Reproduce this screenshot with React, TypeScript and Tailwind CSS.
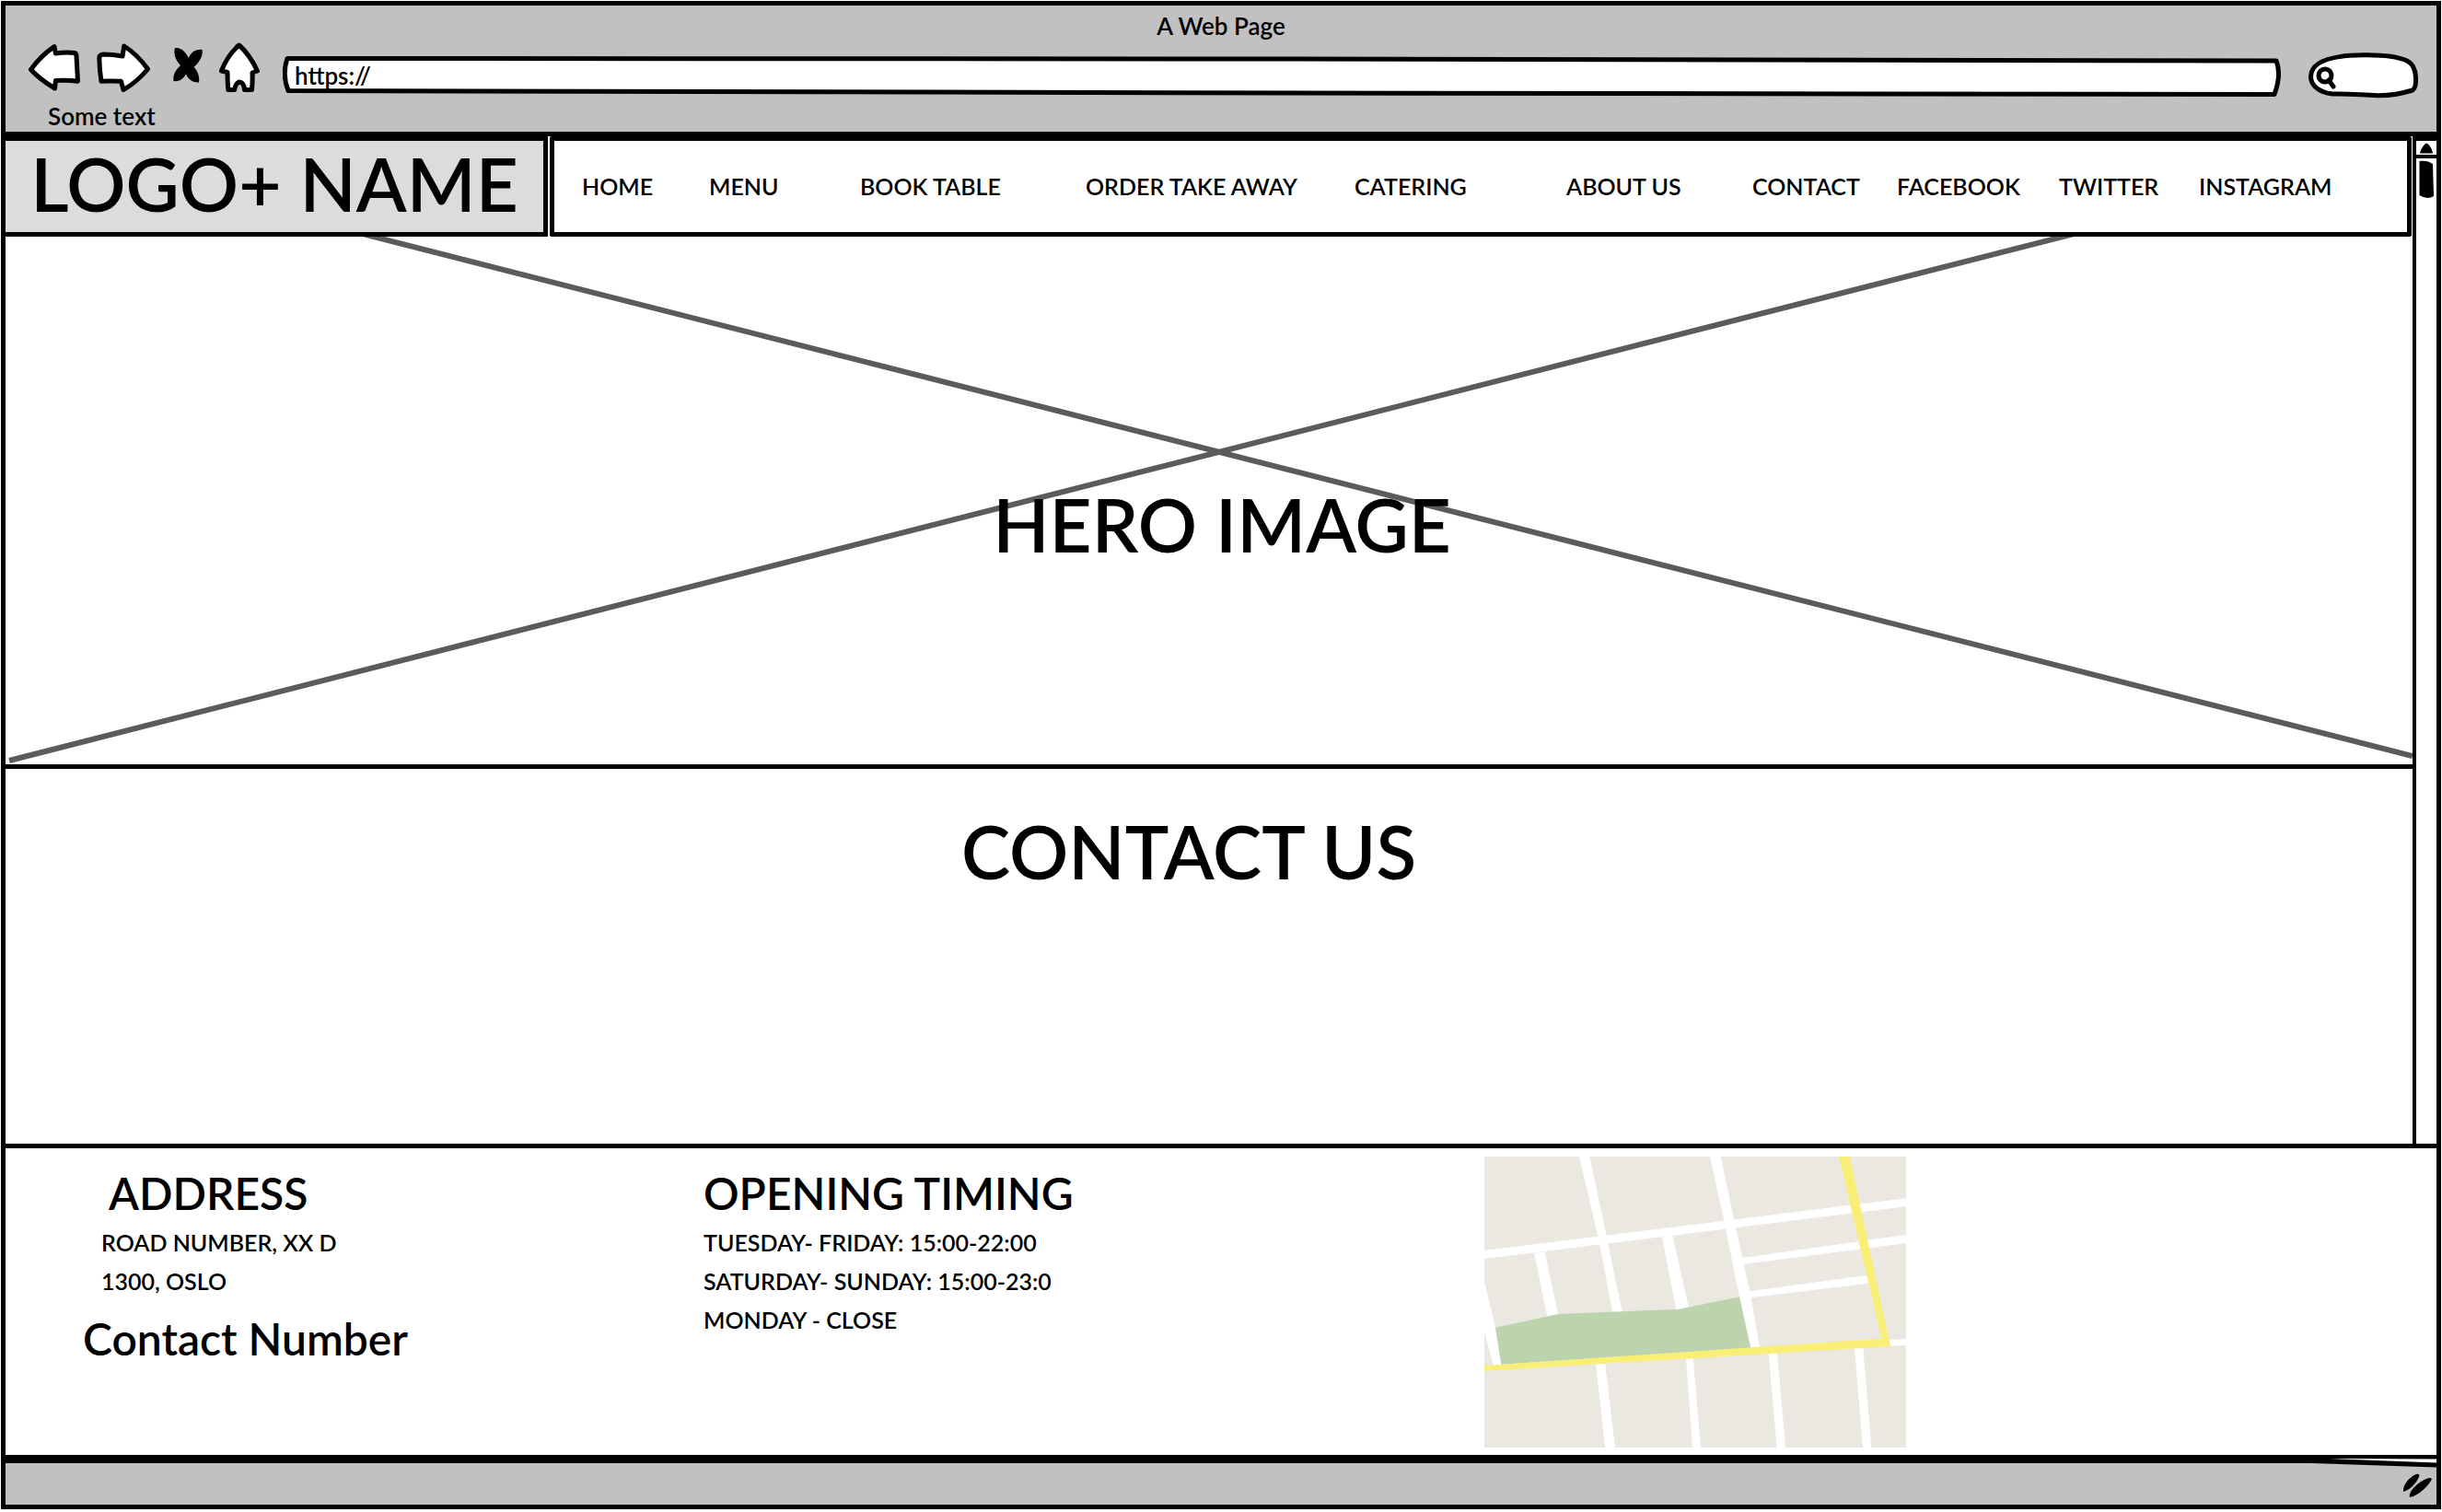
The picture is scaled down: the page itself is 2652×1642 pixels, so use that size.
const navLinks = [
  'HOME',
  'MENU',
  'BOOK TABLE',
  'ORDER TAKE AWAY',
  'CATERING',
  'ABOUT US',
  'CONTACT',
  'FACEBOOK',
  'TWITTER',
  'INSTAGRAM',
];

const openingTimes = [
  'TUESDAY- FRIDAY: 15:00-22:00',
  'SATURDAY- SUNDAY: 15:00-23:0',
  'MONDAY - CLOSE',
];

const sketch = {
  fill: 'white',
  stroke: 'black',
  strokeWidth: 5,
  strokeLinejoin: 'round' as const,
  strokeLinecap: 'round' as const,
};

function BrowserBar() {
  return (
    <header className="border-[5px] border-black bg-[#c1c1c1] pt-1 pb-px">
      <p className="text-center leading-9">A Web Page</p>
      <div className="flex h-16 items-start pr-5 pl-[25px]">
        <button type="button" aria-label="Back" className="mr-[18px] shrink-0">
          <svg width="56" height="54" viewBox="0 0 56 54" {...sketch}>
            <path d="M2.5 29.5 Q14 14 28 4.7 L29.4 12 Q40 10.5 50 11.5 Q52 12 52 15 L53.5 42.3 Q42 40.5 29.4 41.5 L28.6 50 Q12 40 2.5 29.5Z" />
          </svg>
        </button>
        <button type="button" aria-label="Forward" className="mr-[25px] shrink-0">
          <svg width="58" height="54" viewBox="0 0 58 54" {...sketch}>
            <path d="M2.8 17 Q3 13.5 7 13 Q18 13 28 15 L29.7 4 Q44 13 55.5 29 Q44 43 29 51.5 L26.4 42.3 Q15 41.5 5 42.3 Q3 30 2.8 17Z" />
          </svg>
        </button>
        <button type="button" aria-label="Stop" className="mr-[18px] shrink-0">
          <svg width="32" height="54" viewBox="0 0 32 54">
            <path d="M2 6 C9 5 14 11 17 17 C19 11 25 7 31.5 8 C33 15 28 22 22.5 27 C27 31 29 38 28 43.5 C20 44 16 39 14 34.5 C11 40 6 43 .5 42 C-.5 35 3 30 8 25 C3 20 0 12 2 6Z" />
          </svg>
        </button>
        <button type="button" aria-label="Home" className="mr-[25px] shrink-0">
          <svg width="44" height="54" viewBox="0 0 44 54" {...sketch}>
            <path d="M21.6 3 Q33 13 41.5 31 L36 33 Q36.5 42 35.5 51.5 L27.5 51.5 Q27 43 21.6 43 Q17.5 45 16.7 51.5 L9.8 51.5 Q9 42 9 32.5 L2.5 31 Q9 14 21.6 3Z" />
          </svg>
        </button>
        <div className="relative mr-[29px] mb-[5px] h-11 min-w-0 flex-1 self-end">
          <svg className="absolute inset-0 size-full" viewBox="0 0 2170 44" preserveAspectRatio="none" aria-hidden="true" {...sketch}>
            <path vectorEffect="non-scaling-stroke" d="M5 2.5 L1100 3 L2164 5 Q2170 20 2162 41.5 L1100 40 L6 37.5 Q-1 20 5 2.5Z" />
          </svg>
          <input type="text" aria-label="Address" defaultValue="https://" className="relative h-[42px] w-full bg-transparent px-[13px] outline-none" />
        </div>
        <div className="relative mb-[3px] h-[50px] w-[119px] shrink-0 self-end">
          <svg className="absolute inset-0" width="119" height="50" viewBox="0 0 119 50" aria-hidden="true" {...sketch}>
            <path d="M26 45 C10 43 2.5 35 2.5 26 C3 10 24 3 60 2.8 C80 2.5 98 5 107 9 C115 13 117 22 116.5 32 Q116 39 113 41 C100 45 90 47 75 46.8 C55 46 40 44.5 26 45Z" />
            <circle cx="18" cy="25" r="7" />
            <path d="M22 30 L27 37" />
          </svg>
          <input type="search" aria-label="Search" className="relative h-full w-full bg-transparent pr-4 pl-9 outline-none" />
        </div>
      </div>
      <p className="pl-[46px] leading-8">Some text</p>
    </header>
  );
}

function SiteHeader() {
  return (
    <div className="flex h-[109px]">
      <div className="flex w-[589px] shrink-0 items-center justify-center border-[5px] border-l-0 border-black bg-[#dcdcdc] pb-2 text-[80px] leading-none whitespace-nowrap">
        LOGO+ NAME
      </div>
      <nav className="mr-px ml-0.5 grid min-w-0 flex-1 grid-cols-[138fr_164fr_245fr_292fr_230fr_202fr_157fr_176fr_152fr_226fr] items-center rounded-[2px] border-[5px] border-black pl-[30px] text-[25px] whitespace-nowrap">
        {navLinks.map((label) => (
          <a key={label} href="#">
            {label}
          </a>
        ))}
      </nav>
    </div>
  );
}

function Hero() {
  return (
    <section className="relative flex grow-[573] basis-0 items-center justify-center border-b-[5px] border-black pl-7">
      <svg className="absolute inset-0 size-full" viewBox="0 0 2614 573" preserveAspectRatio="none" stroke="#5b5b5d" strokeWidth="6" aria-hidden="true">
        <path vectorEffect="non-scaling-stroke" d="M4 569 L2250 -4" />
        <path vectorEffect="non-scaling-stroke" d="M384 -4 L2614 564" />
      </svg>
      <h1 className="relative pt-[50px] text-[80px] leading-none">HERO IMAGE</h1>
    </section>
  );
}

function ScrollBar() {
  return (
    <div className="flex w-[26px] shrink-0 flex-col border-t-[5px] border-l-4 border-black">
      <button type="button" aria-label="Scroll up" className="flex h-[19px] items-center justify-center border-b-4 border-black">
        <svg width="16" height="12" viewBox="0 0 16 12">
          <path d="M1 11.5 C2 7 5 2 8 .5 C12 2 14 7 15 11.5Z" />
        </svg>
      </button>
      <svg className="mt-0.5 self-center" width="16" height="42" viewBox="0 0 16 42">
        <path d="M.5 1 Q9 -.5 15 4 L16 39 Q9 43.5 .5 38Z" />
      </svg>
    </div>
  );
}

function CityMap() {
  return (
    <svg width="458" height="316" viewBox="0 0 1374 948" role="img" aria-label="Map">
      <rect width="1374" height="948" fill="#ebe8e1" />
      <g fill="white">
        <path d="M0 306 L1374 136 V163 L0 333Z" />
        <path d="M309 0 H343 L397 255 L449 506 H417 L377 290 L370 260Z" />
        <path d="M735 0 H770 L812 200 L841 330 L865 440 L897 620 H867 L831 457 L786 234Z" />
        <path d="M163 315 L197 310 L241 518 H204Z" />
        <path d="M578 258 L612 252 L666 492 L625 498Z" />
        <path d="M841 330 L1374 255 V282 L841 351Z" />
        <path d="M863 439 L1250 386 V413 L868 460Z" />
        <path d="M0 405 L36 557 L56 680 H29 L0 570Z" />
        <path d="M1300 600 L1374 593 V615 L1300 619Z" />
        <path d="M363 670 H393 L426 948 H393Z" />
        <path d="M657 655 H680 L705 948 H678Z" />
        <path d="M926 640 H954 L981 948 H953Z" />
        <path d="M1206 625 H1234 L1261 948 H1233Z" />
      </g>
      <path d="M36 557 L240 513 L635 497 L831 457 L868 625 L55 677Z" fill="#bcd4ad" />
      <path d="M1155 0 H1190 L1323 618 L0 698 V681 L1294 593Z" fill="#f9ee76" />
    </svg>
  );
}

function SiteFooter() {
  return (
    <footer className="grid grid-cols-[758fr_848fr_1034fr] border-x-[5px] border-b-4 border-black pb-2 text-[25px] leading-[42px]">
      <address className="pt-[19px] pl-[84px] not-italic">
        <h2 className="mb-0.5 pl-7 text-5xl leading-[60px]">ADDRESS</h2>
        <p className="pl-5">ROAD NUMBER, XX D</p>
        <p className="pl-5">1300, OSLO</p>
        <h2 className="mt-3 text-5xl leading-[60px]">Contact Number</h2>
      </address>
      <section className="pt-[19px]">
        <h2 className="mb-0.5 text-5xl leading-[60px]">OPENING TIMING</h2>
        {openingTimes.map((line) => (
          <p key={line}>{line}</p>
        ))}
      </section>
      <div className="pt-[9px]">
        <CityMap />
      </div>
    </footer>
  );
}

function StatusBar() {
  return (
    <div className="relative flex h-[55px] items-center justify-end border-[5px] border-black bg-[#c1c1c1] pr-1">
      <svg className="absolute -top-[5px] right-0" width="166" height="10" viewBox="0 0 166 10" aria-hidden="true">
        <path d="M0 4 L166 9.5 V4Z" />
        <path d="M50 0 L166 4.5 V.5Z" fill="white" />
      </svg>
      <svg className="mt-1" width="33" height="27" viewBox="0 0 33 27" aria-hidden="true">
        <path d="M1 20 C0 12 9 3 15 1 C18 0 19 2 18 4 C15 11 8 18 1 20Z" />
        <path d="M8 26 C6 19 20 7 29 5 C32 5 32.5 6 31 8 C27 15 16 25 8 26Z" />
      </svg>
    </div>
  );
}

export default function App() {
  return (
    <div className="flex min-h-screen flex-col bg-white px-px pt-px pb-[3px] font-['Lato',sans-serif] text-[26px] text-black [&_*]:font-semibold">
      <BrowserBar />
      <main className="flex flex-1 border-x-[5px] border-b-[5px] border-black">
        <div className="flex min-w-0 flex-1 flex-col">
          <SiteHeader />
          <Hero />
          <section className="grow-[407] basis-0 pr-11 text-center">
            <h2 className="pt-[49px] text-[80px] leading-none">CONTACT US</h2>
          </section>
        </div>
        <ScrollBar />
      </main>
      <SiteFooter />
      <StatusBar />
    </div>
  );
}
